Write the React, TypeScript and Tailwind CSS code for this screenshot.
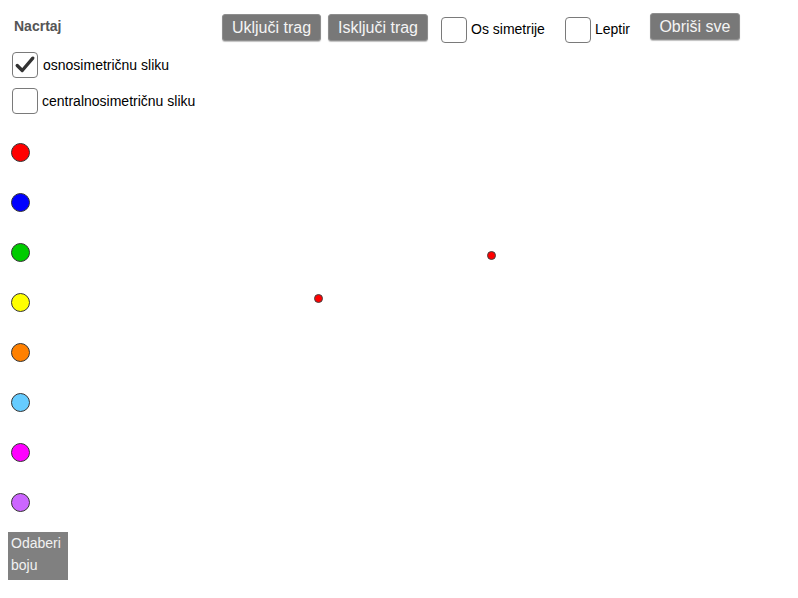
import { ReactNode } from "react";

const colors = ["#ff0000", "#0000ff", "#00cc00", "#ffff00", "#ff8000", "#66ccff", "#ff00ff", "#cc66ff"];

// little gray push button, like in the applet
const Btn = ({ children, className = "" }: { children: ReactNode; className?: string }) => (
  <button
    className={`h-[27px] rounded-[3px] border border-[#8e8e8e] bg-[#787878] text-[16px] leading-[25px] text-[#f4f4f4] shadow-[0_1px_1px_rgba(0,0,0,0.25)] ${className}`}
  >
    {children}
  </button>
);

const Box = ({ checked = false }: { checked?: boolean }) => (
  <span className="flex size-[26px] shrink-0 items-center justify-center rounded-[4px] border border-[#7a7a7a] bg-white">
    {checked && (
      <svg viewBox="0 0 24 24" className="size-[22px]">
        <path d="M3.5 12.5 L9 18 L20.5 4.5" fill="none" stroke="#333" strokeWidth="3.6" strokeLinecap="round" strokeLinejoin="round" />
      </svg>
    )}
  </span>
);

const App = () => {
  return (
    <div className="relative flex h-[598px] w-[798px] overflow-hidden bg-white font-['Liberation_Sans',Arial,sans-serif] text-black">
      {/* left side panel */}
      <div className="flex w-[222px] shrink-0 flex-col">
        <div className="ml-[14px] mt-[18px] h-4 text-[14px] font-bold leading-4 text-[#555]">Nacrtaj</div>

        <label className="ml-3 mt-[18px] flex h-[26px] items-center gap-[5px] text-[14px]">
          <Box checked />
          <span>osnosimetričnu sliku</span>
        </label>
        <label className="ml-3 mt-[10px] flex h-[26px] items-center gap-[4px] text-[14px]">
          <Box />
          <span>centralnosimetričnu sliku</span>
        </label>

        {/* colour picks */}
        <div className="ml-[11px] mt-[29px] flex flex-col gap-[31px]">
          {colors.map((c) => (
            <span key={c} className="block size-[19px] rounded-full border border-[#333]" style={{ backgroundColor: c }} />
          ))}
        </div>

        <div className="ml-2 mt-[20px] h-[48px] w-[60px] bg-[#808080] px-[3px] text-[14px] leading-[22px] text-[#f2f2f2]">
          Odaberi
          <br />
          boju
        </div>
      </div>

      {/* toolbar */}
      <div className="flex h-fit items-start pt-[13px] text-[14px]">
        <Btn className="mt-px w-[99px]">Uključi trag</Btn>
        <Btn className="ml-[7px] mt-px w-[100px]">Isključi trag</Btn>
        <label className="ml-[13px] mt-[3px] flex h-[27px] items-center gap-[4px]">
          <Box />
          <span>Os simetrije</span>
        </label>
        <label className="ml-[20px] mt-[3px] flex h-[27px] items-center gap-[4px]">
          <Box />
          <span>Leptir</span>
        </label>
        <Btn className="ml-[20px] w-[90px]">Obriši sve</Btn>
      </div>

      {/* points on the drawing canvas */}
      <span className="absolute left-[313.5px] top-[293.5px] size-[9px] rounded-full border border-[#444] bg-[#ff0000]" />
      <span className="absolute left-[486.5px] top-[250.5px] size-[9px] rounded-full border border-[#444] bg-[#ff0000]" />
    </div>
  );
};

export default App;
